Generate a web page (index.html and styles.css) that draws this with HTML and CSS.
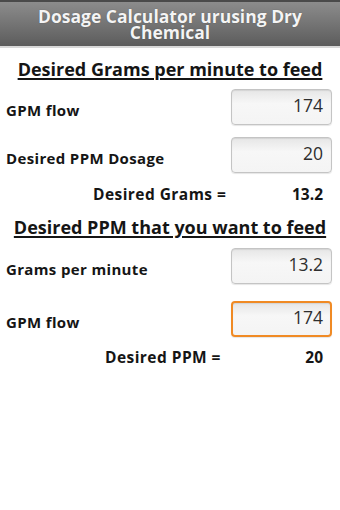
FILE: index.html
```html
<!DOCTYPE html>
<html>
<head>
<meta charset="utf-8">
<link rel="stylesheet" href="styles.css">
</head>
<body>
<div class="titlebar"><div class="title-line">Dosage Calculator urusing Dry</div><div class="title-line">Chemical</div></div>
<div class="content">
  <h2 class="section-title first">Desired Grams per minute to feed</h2>
  <div class="row row-a">
    <span class="label">GPM flow</span>
    <div class="field">174</div>
  </div>
  <div class="row row-b">
    <span class="label">Desired PPM Dosage</span>
    <div class="field">20</div>
  </div>
  <div class="result result-a">
    <span class="result-label">Desired Grams =</span>
    <span class="result-value">13.2</span>
  </div>
  <h2 class="section-title second">Desired PPM that you want to feed</h2>
  <div class="row row-c">
    <span class="label">Grams per minute</span>
    <div class="field">13.2</div>
  </div>
  <div class="row row-d">
    <span class="label">GPM flow</span>
    <div class="field focused">174</div>
  </div>
  <div class="result result-b">
    <span class="result-label">Desired PPM =</span>
    <span class="result-value">20</span>
  </div>
</div>
</body>
</html>
```

FILE: styles.css
```css
html, body {
  margin: 0;
  padding: 0;
  background: #ffffff;
}
body {
  width: 340px;
  height: 510px;
  font-family: "Open Sans", "DejaVu Sans", sans-serif;
  color: #111;
}
.titlebar {
  height: 48px;
  box-sizing: border-box;
  border-top: 2px solid #4a4a4a;
  border-bottom: 2px solid #d8d8d8;
  background: linear-gradient(#8c8c8c, #5c5c5c);
  color: #f4f4f4;
  font-weight: 700;
  font-size: 17.5px;
  text-align: center;
  padding-top: 6px;
  text-shadow: 0 0 1px rgba(0,0,0,0.4);
}
.title-line {
  height: 16px;
  line-height: 16px;
}
.content {
  padding: 0 8px 0 6px;
}
.section-title {
  margin: 0;
  font-size: 18px;
  line-height: 22px;
  font-weight: 700;
  text-align: center;
  text-decoration: underline;
  text-decoration-thickness: 2px;
  text-underline-offset: 2px;
  color: #151515;
  padding-left: 2px;
}
.section-title.first { margin-top: 10px; }
.section-title.second { margin-top: 12px; }
.row {
  display: flex;
  align-items: center;
  justify-content: space-between;
}
.row-a { margin-top: 9px; }
.row-b { margin-top: 12px; }
.row-c { margin-top: 10px; }
.row-d { margin-top: 17px; }
.label {
  font-size: 15px;
  letter-spacing: 0.35px;
  font-weight: 700;
  padding-top: 6px;
  color: #151515;
}
.field {
  width: 101px;
  height: 36px;
  box-sizing: border-box;
  border: 1px solid #c4c4c4;
  border-radius: 4px;
  background: linear-gradient(#e6e6e6, #f7f7f7 40%, #f4f4f4);
  box-shadow: inset 0 1px 1px rgba(0,0,0,0.08), 0 1px 1px rgba(0,0,0,0.1);
  text-align: right;
  font-size: 17.5px;
  line-height: 30px;
  padding-right: 8px;
  color: #2e2e2e;
}
.field.focused {
  border: 2px solid #f08a24;
  line-height: 28px;
  padding-right: 7px;
}
.result {
  display: flex;
  align-items: center;
  font-size: 15.5px;
  letter-spacing: 0.45px;
  font-weight: 700;
  height: 20px;
  color: #151515;
}
.result-a { margin-top: 11px; }
.result-b { margin-top: 10px; }
.result-value {
  margin-left: auto;
  margin-right: 9px;
  letter-spacing: 0;
}
.result-a .result-label { margin-left: 87px; }
.result-b .result-label { margin-left: 99px; }
```
